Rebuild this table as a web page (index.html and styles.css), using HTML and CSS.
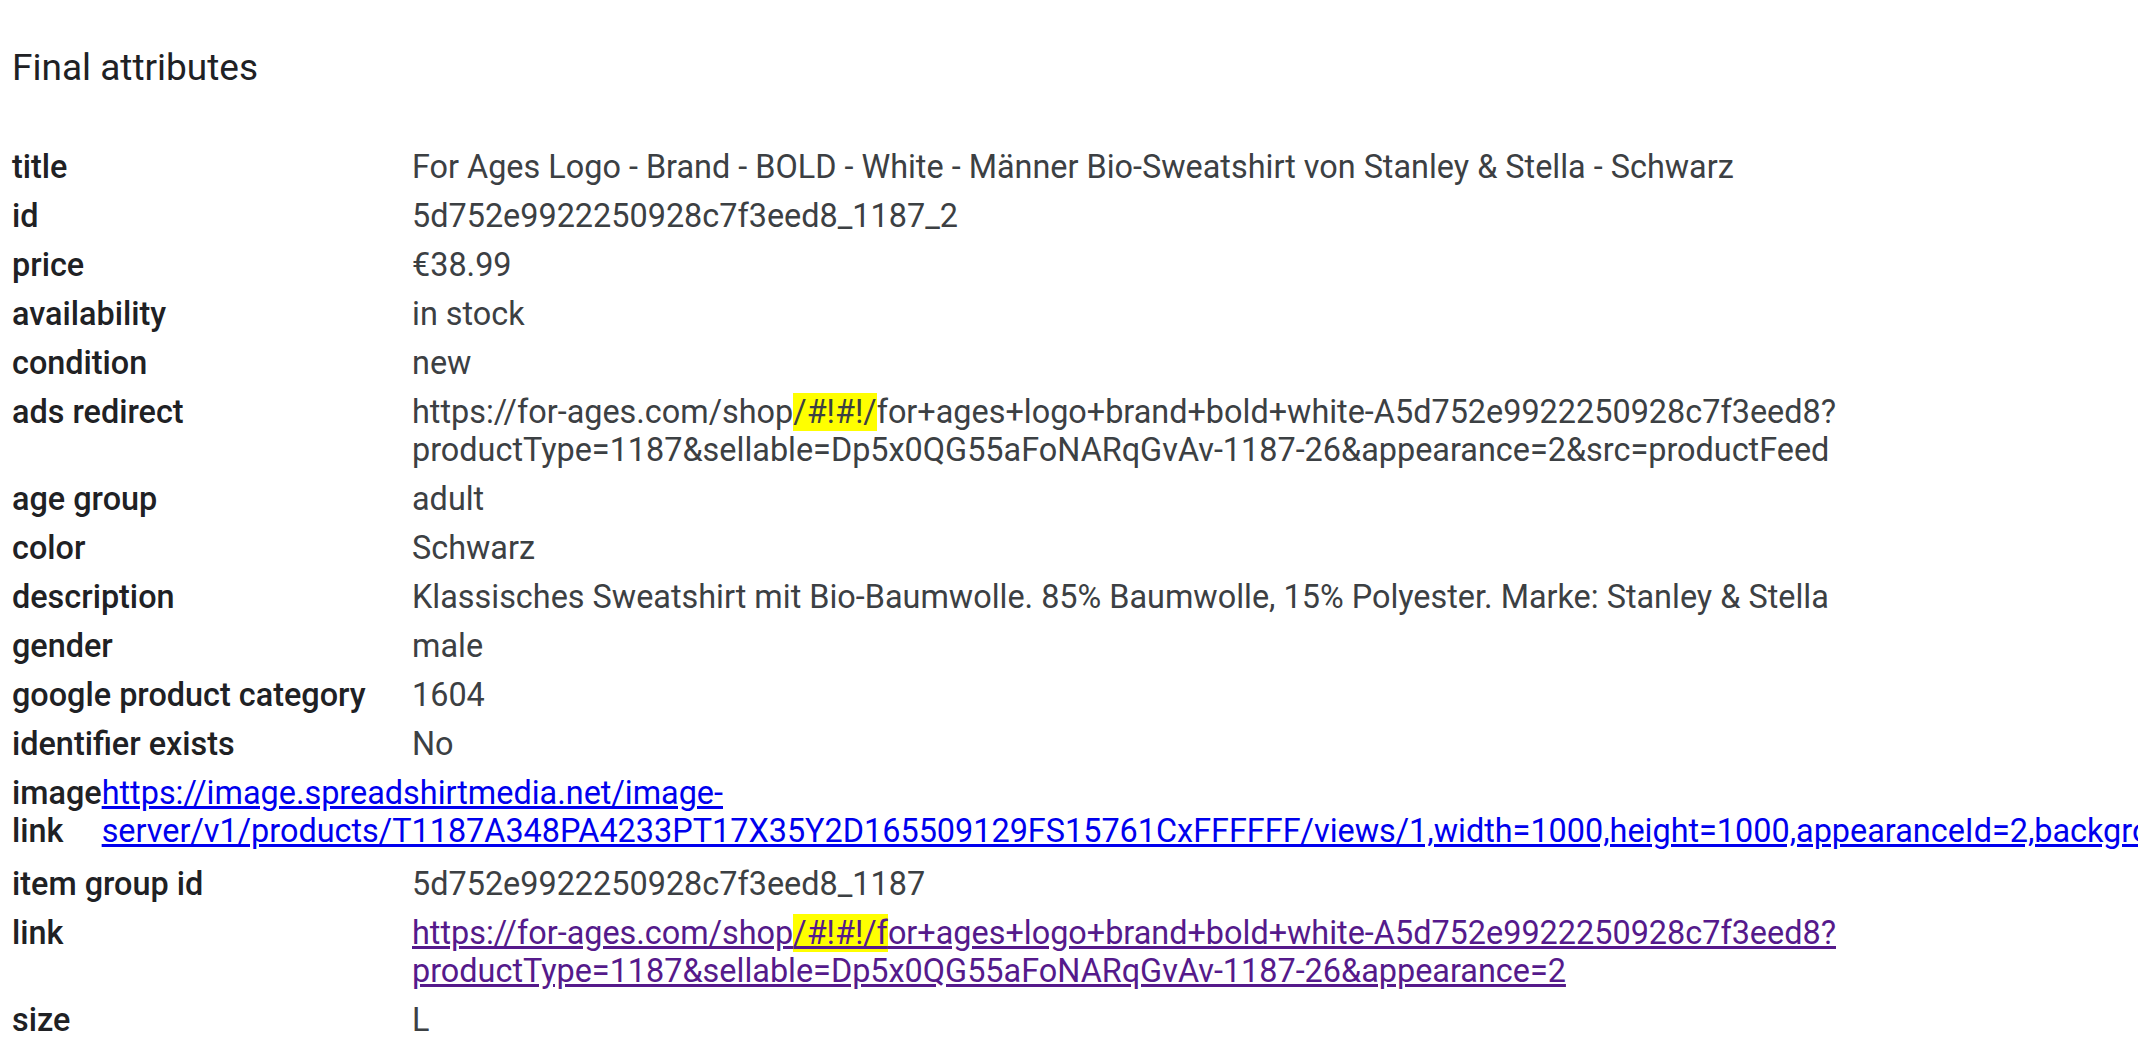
FILE: index.html
```html
<!DOCTYPE html>
<html lang="en">
<head>
<meta charset="utf-8">
<title>Final attributes</title>
<link rel="stylesheet" href="styles.css">
</head>
<body>
<main class="page">
  <h1 class="heading">Final attributes</h1>
  <div class="attrs">
    <div class="row"><div class="label">title</div><div class="value">For Ages Logo - Brand - BOLD - White - Männer Bio-Sweatshirt von Stanley &amp; Stella - Schwarz</div></div>
    <div class="row"><div class="label">id</div><div class="value">5d752e9922250928c7f3eed8_1187_2</div></div>
    <div class="row"><div class="label">price</div><div class="value">€38.99</div></div>
    <div class="row"><div class="label">availability</div><div class="value">in stock</div></div>
    <div class="row"><div class="label">condition</div><div class="value">new</div></div>
    <div class="row"><div class="label">ads redirect</div><div class="value">https://for-ages.com/shop<span class="hl">/#!#!/</span>for+ages+logo+brand+bold+white-A5d752e9922250928c7f3eed8?productType=1187&amp;sellable=Dp5x0QG55aFoNARqGvAv-1187-26&amp;appearance=2&amp;src=productFeed</div></div>
    <div class="row"><div class="label">age group</div><div class="value">adult</div></div>
    <div class="row"><div class="label">color</div><div class="value">Schwarz</div></div>
    <div class="row"><div class="label">description</div><div class="value">Klassisches Sweatshirt mit Bio-Baumwolle. 85% Baumwolle, 15% Polyester. Marke: Stanley &amp; Stella</div></div>
    <div class="row"><div class="label">gender</div><div class="value">male</div></div>
    <div class="row"><div class="label">google product category</div><div class="value">1604</div></div>
    <div class="row"><div class="label">identifier exists</div><div class="value">No</div></div>
    <div class="row row-tall"><div class="label">image link</div><div class="value"><a class="link" href="#img">https://image.spreadshirtmedia.net/image-server/v1/products/T1187A348PA4233PT17X35Y2D165509129FS15761CxFFFFFF/views/1,width=1000,height=1000,appearanceId=2,backgroundColor=F2F2F2.jpg</a></div></div>
    <div class="row"><div class="label">item group id</div><div class="value">5d752e9922250928c7f3eed8_1187</div></div>
    <div class="row"><div class="label">link</div><div class="value"><a class="link visited" href="#link">https://for-ages.com/shop<span class="hl">/#!#!/f</span>or+ages+logo+brand+bold+white-A5d752e9922250928c7f3eed8?productType=1187&amp;sellable=Dp5x0QG55aFoNARqGvAv-1187-26&amp;appearance=2</a></div></div>
    <div class="row"><div class="label">size</div><div class="value">L</div></div>
  </div>
</main>
</body>
</html>
```
FILE: styles.css
```css
html {
  overflow-x: hidden;
}
body {
  margin: 0;
  background: #ffffff;
  font-family: Roboto, "Noto Sans", Arial, sans-serif;
  color: #202124;
}
.page {
  padding: 44px 0 0 12px;
}
.heading {
  margin: 0;
  font-size: 37px;
  font-weight: 400;
  line-height: 48px;
  color: #202124;
}
.attrs {
  margin-top: 51px;
  display: flex;
  flex-direction: column;
}
.row {
  display: grid;
  grid-template-columns: minmax(auto, 400px) 1fr;
  padding: 5px 0 6px;
  font-size: 32.4px;
  line-height: 38px;
}
.row-tall {
  padding-bottom: 10px;
}
.label {
  font-weight: 500;
  color: #202124;
}
.value {
  color: #3c4043;
}
.link {
  color: #0000ee;
  text-decoration: underline;
}
.link.visited {
  color: #551a8b;
}
.hl {
  background: #ffff00;
}
```
